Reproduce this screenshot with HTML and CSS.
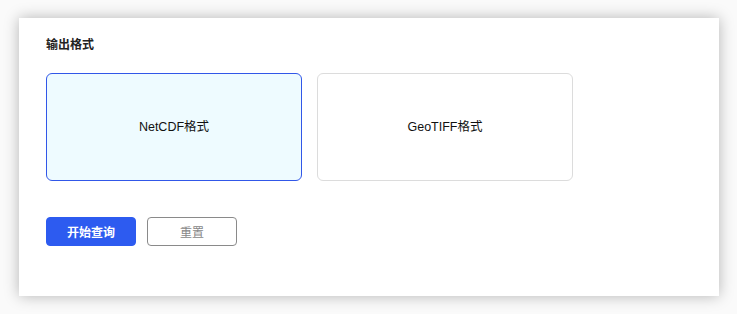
FILE: index.html
```html
<!DOCTYPE html>
<html lang="zh">
<head>
<meta charset="utf-8">
<link rel="stylesheet" href="styles.css">
</head>
<body>
<div class="panel">
  <div class="title">输出格式</div>
  <div class="options">
    <div class="option selected">NetCDF格式</div>
    <div class="option">GeoTIFF格式</div>
  </div>
  <div class="actions">
    <button class="btn primary">开始查询</button>
    <button class="btn ghost">重置</button>
  </div>
</div>
</body>
</html>
```
FILE: styles.css
```css
html, body { margin: 0; padding: 0; }
body {
  width: 737px;
  height: 314px;
  background: #fafafa;
  font-family: "Helvetica Neue", "Liberation Sans", "Noto Sans CJK SC", sans-serif;
  box-sizing: border-box;
  padding: 18px 18px 18px 19px;
  overflow: hidden;
}
.panel {
  width: 700px;
  height: 278px;
  background: #fff;
  box-shadow: 0 0 14px rgba(0,0,0,0.28);
  box-sizing: border-box;
  padding: 18px 27px 0 27px;
}
.title {
  font-size: 12px;
  font-weight: bold;
  color: #222;
  line-height: 16px;
  font-family: "Noto Sans CJK SC", sans-serif;
}
.options {
  display: flex;
  gap: 15px;
  margin-top: 21px;
}
.option {
  width: 256px;
  height: 108px;
  box-sizing: border-box;
  border: 1px solid #dcdcdc;
  border-radius: 6px;
  display: flex;
  align-items: center;
  justify-content: center;
  font-size: 12.5px;
  color: #111;
  background: #fff;
  padding-bottom: 3px;
}
.option.selected {
  border-color: #3157e8;
  background: #eefbff;
}
.actions {
  display: flex;
  gap: 11px;
  margin-top: 36px;
}
.btn {
  width: 90px;
  height: 29px;
  box-sizing: border-box;
  border-radius: 4px;
  font-size: 12px;
  font-family: "Noto Sans CJK SC", sans-serif;
  padding: 0;
  cursor: pointer;
}
.btn.primary {
  background: #2d5bf0;
  border: 1px solid #2d5bf0;
  color: #fff;
  font-weight: bold;
}
.btn.ghost {
  background: #fff;
  border: 1px solid #8a8a8a;
  color: #888;
}
```
